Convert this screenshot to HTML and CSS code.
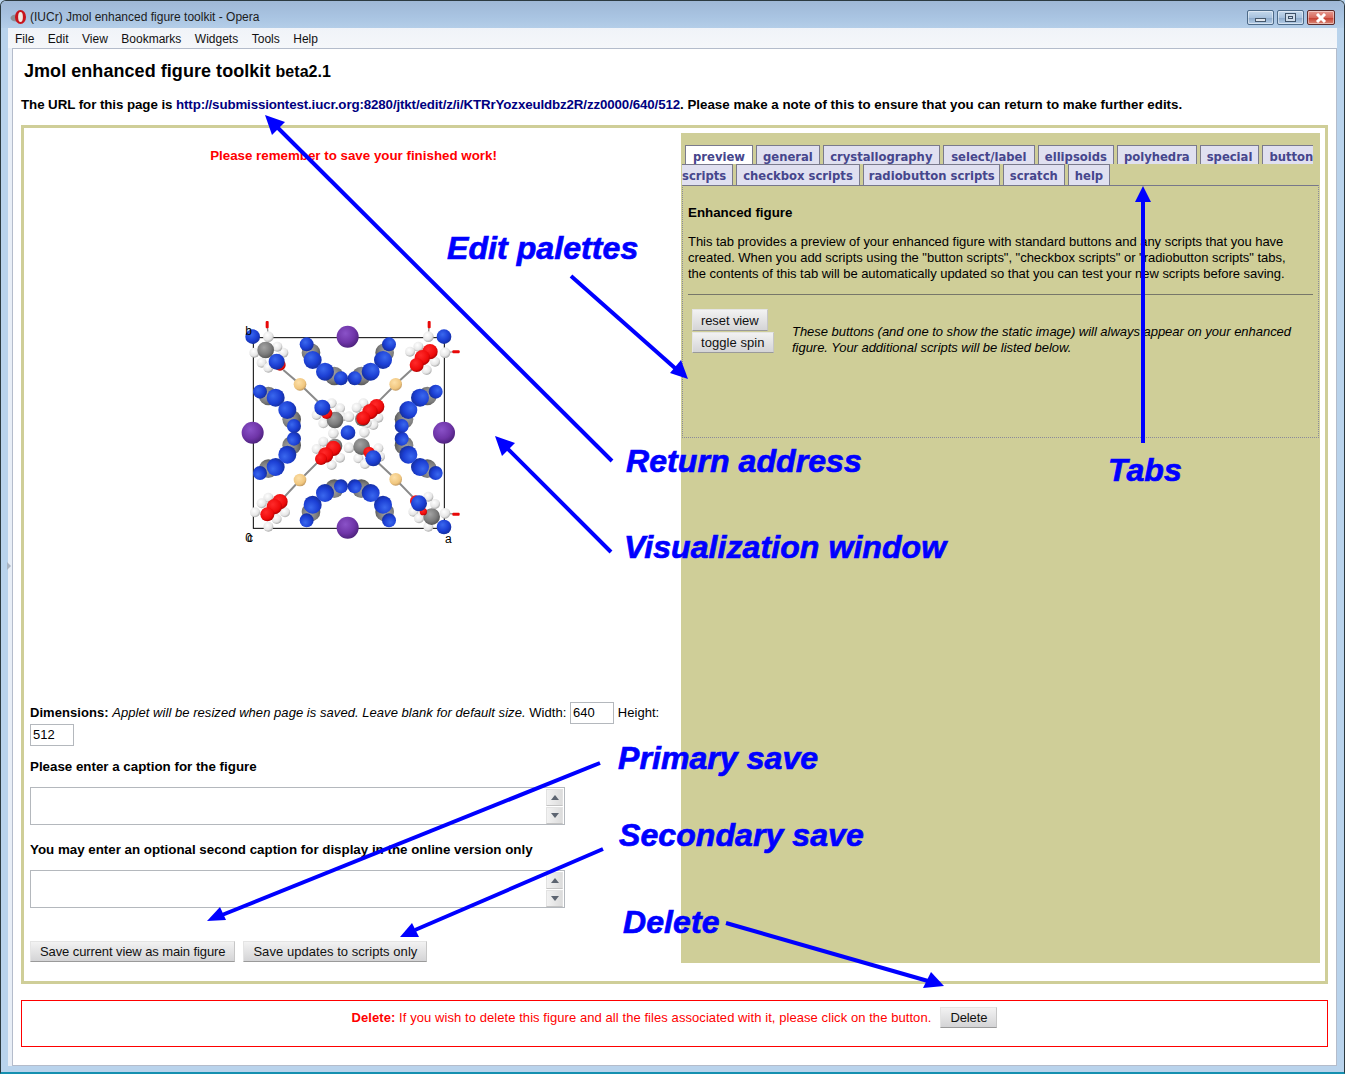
FILE: index.html
```html
<!DOCTYPE html>
<html lang="en">
<head>
<meta charset="utf-8">
<title>(IUCr) Jmol enhanced figure toolkit - Opera</title>
<link rel="stylesheet" href="styles.css">
</head>
<body>
<div class="window">
  <div class="titlebar">
    <svg class="logo" width="18" height="16" viewBox="0 0 18 16">
      <ellipse cx="6" cy="9" rx="5.5" ry="3.5" fill="#8a8f96"/>
      <ellipse cx="10.5" cy="8" rx="5.5" ry="7" fill="#c8141c"/>
      <ellipse cx="10.5" cy="8" rx="2.4" ry="5" fill="#efe9e2"/>
    </svg>
    <span class="title-text">(IUCr) Jmol enhanced figure toolkit - Opera</span>
    <div class="winbtns">
      <div class="winbtn"><span class="glyph-min"></span></div>
      <div class="winbtn"><span class="glyph-max"></span></div>
      <div class="winbtn winclose">
        <svg width="14" height="10" viewBox="0 0 14 10"><path d="M3 1 L11 9 M11 1 L3 9" stroke="#fff" stroke-width="3" fill="none"/></svg>
      </div>
    </div>
  </div>
  <div class="menubar">
    <span>File</span><span>Edit</span><span>View</span><span>Bookmarks</span><span>Widgets</span><span>Tools</span><span>Help</span>
  </div>
  <div class="body-row">
    <div class="side-strip"><span class="grip"></span></div>
    <main class="content">
      <h1>Jmol enhanced figure toolkit <small>beta2.1</small></h1>
      <p class="url-line">The URL for this page is <a href="#">http://submissiontest.iucr.org:8280/jtkt/edit/z/i/KTRrYozxeuldbz2R/zz0000/640/512</a><span class="url-tail">. Please make a note of this to ensure that you can return to make further edits.</span></p>

      <section class="panel">
        <div class="left-col">
          <p class="remember">Please remember to save your finished work!</p>
          <div class="applet">
            <svg class="molecule" width="235" height="235" viewBox="0 0 705 705">
              <defs>
                <radialGradient id="gb" cx=".4" cy=".35" r=".7"><stop offset="0" stop-color="#3a68ee"/><stop offset=".6" stop-color="#1c3fd4"/><stop offset="1" stop-color="#142c98"/></radialGradient>
                <radialGradient id="gg" cx=".4" cy=".35" r=".7"><stop offset="0" stop-color="#a4a4a4"/><stop offset=".6" stop-color="#7c7c7c"/><stop offset="1" stop-color="#505050"/></radialGradient>
                <radialGradient id="gw" cx=".4" cy=".35" r=".7"><stop offset="0" stop-color="#ffffff"/><stop offset=".65" stop-color="#e6e6e6"/><stop offset="1" stop-color="#a0a0a0"/></radialGradient>
                <radialGradient id="gr" cx=".4" cy=".35" r=".7"><stop offset="0" stop-color="#ff2a2a"/><stop offset=".7" stop-color="#ee0a0a"/><stop offset="1" stop-color="#a00000"/></radialGradient>
                <radialGradient id="gt" cx=".4" cy=".35" r=".7"><stop offset="0" stop-color="#fde0a8"/><stop offset=".7" stop-color="#f0c67e"/><stop offset="1" stop-color="#b8905a"/></radialGradient>
                <radialGradient id="gp" cx=".4" cy=".35" r=".7"><stop offset="0" stop-color="#8a52c8"/><stop offset=".6" stop-color="#6f35a8"/><stop offset="1" stop-color="#4a2078"/></radialGradient>
                <g id="arc-t">
                  <circle cx="228" cy="113" r="28" fill="url(#gg)"/>
                  <circle cx="298" cy="183" r="28" fill="url(#gg)"/>
                  <circle cx="215" cy="88" r="21" fill="url(#gb)"/>
                  <circle cx="318" cy="190" r="21" fill="url(#gb)"/>
                  <circle cx="233" cy="135" r="27" fill="url(#gb)"/>
                  <circle cx="270" cy="170" r="27" fill="url(#gb)"/>
                </g>
                <g id="arc-l"><use href="#arc-t" transform="matrix(0 1 1 0 -13 15)"/></g>
              </defs>
              <g class="bonds">
                <path d="M145 165 L195 208 L265 275"/>
                <path d="M545 150 L482 208 L415 275"/>
                <path d="M135 560 L195 495 L265 425"/>
                <path d="M415 430 L482 493 L552 565"/>
                <path class="thin" d="M97 35 L100 65 M582 35 L580 65 M630 113 L660 110 M630 595 L660 597"/>
              </g>
              <g class="cell"><rect x="55" y="68" width="573" height="572"/></g>
              <use href="#arc-t"/>
              <use href="#arc-t" transform="matrix(-1 0 0 1 677 0)"/>
              <use href="#arc-t" transform="matrix(1 0 0 -1 0 704)"/>
              <use href="#arc-t" transform="matrix(-1 0 0 -1 677 704)"/>
              <use href="#arc-l"/>
              <use href="#arc-l" transform="matrix(-1 0 0 1 677 0)"/>
              <use href="#arc-l" transform="matrix(1 0 0 -1 0 704)"/>
              <use href="#arc-l" transform="matrix(-1 0 0 -1 677 704)"/>
              <g fill="url(#gw)">
                <circle cx="100" cy="65" r="16"/><circle cx="58" cy="113" r="15"/><circle cx="145" cy="113" r="15"/><circle cx="127" cy="95" r="15"/><circle cx="80" cy="143" r="15"/><circle cx="100" cy="158" r="15"/>
                <circle cx="550" cy="95" r="15"/><circle cx="525" cy="110" r="15"/><circle cx="600" cy="140" r="15"/><circle cx="575" cy="165" r="15"/><circle cx="580" cy="65" r="16"/><circle cx="630" cy="113" r="16"/>
                <circle cx="100" cy="548" r="15"/><circle cx="80" cy="565" r="15"/><circle cx="60" cy="592" r="15"/><circle cx="150" cy="592" r="15"/><circle cx="125" cy="612" r="15"/><circle cx="100" cy="635" r="15"/>
                <circle cx="630" cy="595" r="16"/><circle cx="535" cy="590" r="15"/><circle cx="552" cy="610" r="15"/><circle cx="580" cy="635" r="15"/><circle cx="600" cy="567" r="15"/><circle cx="580" cy="545" r="15"/>
                <circle cx="290" cy="265" r="15"/><circle cx="315" cy="280" r="15"/><circle cx="288" cy="312" r="15"/><circle cx="265" cy="325" r="15"/><circle cx="245" cy="300" r="15"/><circle cx="320" cy="305" r="15"/><circle cx="342" cy="305" r="16"/>
                <circle cx="385" cy="265" r="15"/><circle cx="365" cy="278" r="15"/><circle cx="430" cy="308" r="15"/><circle cx="415" cy="330" r="15"/><circle cx="395" cy="325" r="15"/><circle cx="388" cy="352" r="16"/>
                <circle cx="265" cy="380" r="15"/><circle cx="245" cy="402" r="15"/><circle cx="315" cy="428" r="15"/><circle cx="290" cy="450" r="15"/><circle cx="295" cy="355" r="16"/><circle cx="342" cy="398" r="16"/>
                <circle cx="370" cy="430" r="15"/><circle cx="390" cy="447" r="15"/><circle cx="430" cy="400" r="15"/><circle cx="435" cy="425" r="15"/>
              </g>
              <g fill="url(#gg)">
                <circle cx="92" cy="105" r="25"/><circle cx="590" cy="605" r="25"/><circle cx="300" cy="315" r="25"/><circle cx="380" cy="395" r="25"/><circle cx="382" cy="312" r="22"/><circle cx="300" cy="393" r="22"/>
              </g>
              <g fill="url(#gr)">
                <circle cx="135" cy="150" r="17"/><circle cx="585" cy="110" r="23"/><circle cx="562" cy="128" r="23"/><circle cx="545" cy="150" r="21"/>
                <circle cx="135" cy="560" r="23"/><circle cx="118" cy="575" r="23"/><circle cx="97" cy="598" r="21"/><circle cx="542" cy="558" r="17"/><circle cx="565" cy="590" r="11"/>
                <circle cx="275" cy="295" r="17"/><circle cx="425" cy="275" r="23"/><circle cx="405" cy="290" r="23"/><circle cx="385" cy="310" r="21"/>
                <circle cx="295" cy="400" r="23"/><circle cx="272" cy="420" r="23"/><circle cx="258" cy="432" r="18"/><circle cx="402" cy="412" r="17"/>
              </g>
              <g class="stub">
                <rect x="92" y="18" width="9" height="22" rx="3"/><rect x="578" y="18" width="9" height="22" rx="3"/>
                <rect x="652" y="106" width="22" height="9" rx="3"/><rect x="652" y="593" width="22" height="9" rx="3"/>
              </g>
              <g fill="url(#gb)">
                <circle cx="53" cy="65" r="22"/><circle cx="627" cy="65" r="22"/><circle cx="627" cy="636" r="22"/><circle cx="125" cy="140" r="24"/><circle cx="552" cy="565" r="24"/><circle cx="262" cy="278" r="24"/><circle cx="415" cy="430" r="24"/><circle cx="339" cy="353" r="22"/>
              </g>
              <g fill="url(#gt)">
                <circle cx="195" cy="208" r="19"/><circle cx="482" cy="208" r="19"/><circle cx="195" cy="495" r="19"/><circle cx="482" cy="493" r="19"/>
              </g>
              <g fill="url(#gp)">
                <circle cx="338" cy="65" r="33"/><circle cx="53" cy="353" r="33"/><circle cx="627" cy="353" r="33"/><circle cx="338" cy="638" r="33"/>
              </g>
              <text class="axis" x="31" y="60">b</text><text class="axis" x="31" y="680">0</text><text class="axis" x="36" y="680">c</text><text class="axis" x="630" y="683">a</text>
            </svg>
          </div>
          <p class="dimensions"><b>Dimensions:</b> <i>Applet will be resized when page is saved. Leave blank for default size.</i> Width: <input class="dim-input" type="text" value="640"> Height: <input class="dim-input" type="text" value="512"></p>
          <p class="caption-label first">Please enter a caption for the figure</p>
          <div class="captionbox">
            <textarea class="caption-input"></textarea>
            <div class="scrollbar"><span class="arrow up"></span><span class="arrow down"></span></div>
          </div>
          <p class="caption-label second">You may enter an optional second caption for display in the online version only</p>
          <div class="captionbox">
            <textarea class="caption-input"></textarea>
            <div class="scrollbar"><span class="arrow up"></span><span class="arrow down"></span></div>
          </div>
          <div class="save-row">
            <button class="btn" type="button">Save current view as main figure</button>
            <button class="btn spaced" type="button">Save updates to scripts only</button>
          </div>
        </div>

        <div class="right-col">
          <div class="tabs">
            <div class="tabrow row1">
              <a class="tab active">preview</a><a class="tab">general</a><a class="tab tab-crystal">crystallography</a><a class="tab tab-select">select/label</a><a class="tab">ellipsoids</a><a class="tab">polyhedra</a><a class="tab">special</a><a class="tab cut-end">button</a>
            </div>
            <div class="tabrow row2">
              <a class="tab cut-start">scripts</a><a class="tab">checkbox scripts</a><a class="tab tab-radio">radiobutton scripts</a><a class="tab">scratch</a><a class="tab">help</a>
            </div>
          </div>
          <div class="tabpanel">
            <h2>Enhanced figure</h2>
            <p class="intro">This tab provides a preview of your enhanced figure with standard buttons and any scripts that you have created. When you add scripts using the "button scripts", "checkbox scripts" or "radiobutton scripts" tabs, the contents of this tab will be automatically updated so that you can test your new scripts before saving.</p>
            <hr class="rule">
            <div class="preview-row">
              <div class="preview-btns">
                <button class="btn small" type="button">reset view</button>
                <button class="btn small toggle" type="button">toggle spin</button>
              </div>
              <p class="preview-note">These buttons (and one to show the static image) will always appear on your enhanced figure. Your additional scripts will be listed below.</p>
            </div>
          </div>
        </div>
      </section>

      <section class="delete-box">
        <span><b>Delete:</b> If you wish to delete this figure and all the files associated with it, please click on the button.</span>
        <button class="btn delete-btn" type="button">Delete</button>
      </section>
    </main>
  </div>

  <svg class="arrows" width="1345" height="1074" viewBox="0 0 1345 1074">
    <g class="shafts">
      <path d="M571 276 L676 369"/>
      <path d="M612 461 L276 126"/>
      <path d="M611 552 L506 447"/>
      <path d="M600 763 L222 915"/>
      <path d="M603 849 L415 930"/>
      <path d="M726 923 L928 981"/>
      <path d="M1143 443 L1143 200"/>
    </g>
    <g class="heads">
      <polygon points="688,379 670,373 681,360"/>
      <polygon points="265,115 285,122 272,135"/>
      <polygon points="495,436 515,443 502,456"/>
      <polygon points="207,921 220,907 226,920"/>
      <polygon points="400,937 412,923 419,937"/>
      <polygon points="944,986 923,988 931,972"/>
      <polygon points="1143,186 1135,202 1151,202"/>
    </g>
  </svg>
  <span class="note note-edit">Edit palettes</span>
  <span class="note note-return">Return address</span>
  <span class="note note-vis">Visualization window</span>
  <span class="note note-tabs">Tabs</span>
  <span class="note note-primary">Primary save</span>
  <span class="note note-secondary">Secondary save</span>
  <span class="note note-delete">Delete</span>
</div>
</body>
</html>
```
FILE: styles.css
```css
* { box-sizing: border-box; }
html, body { margin: 0; padding: 0; }
body { font-family: "Liberation Sans", Arial, sans-serif; font-size: 13px; color: #000; background: #b9d3ec; overflow: hidden; }

.window { position: relative; width: 1345px; height: 1074px; display: flex; flex-direction: column; overflow: hidden;
  background: #b9d3ec; border: 1px solid #2c3a40; border-radius: 6px 6px 0 0; border-bottom: 2px solid #1590b0; }

.titlebar { flex: none; height: 27px; display: flex; align-items: center; padding: 5px 9px 0 9px;
  background: linear-gradient(#9fb8d6, #a9c4e2 60%, #b4cee8); }
.logo { flex: none; margin: 0 2px 0 0; }
.title-text { font-size: 12px; color: #1c1c1c; }
.winbtns { margin-left: auto; display: flex; gap: 3px; margin-top: 1px; }
.winbtn { width: 27px; height: 15px; border: 1px solid #4d6a88; border-radius: 2px; display: flex; align-items: center; justify-content: center;
  background: linear-gradient(#c4d8ec, #a8c2de 50%, #8aa8ca 51%, #b5cde6); box-shadow: inset 0 0 0 1px rgba(255,255,255,.45); }
.winclose { width: 28px; border-color: #5c2a2a; background: linear-gradient(#e59a90, #d86a5e 50%, #c53a2c 51%, #d98878); }
.glyph-min { width: 11px; height: 4px; margin-top: 4px; background: #dfe6ee; border: 1px solid #46586c; }
.glyph-max { width: 11px; height: 9px; background: #cfdcea; border: 1px solid #3f5268; box-shadow: inset 0 0 0 2px #cfdcea, inset 0 0 0 3px #3f5268; }

.menubar { flex: none; height: 20px; margin: 0 7px 0 7px; padding: 1px 0 0 7px; display: flex; gap: 13.5px; align-items: center;
  background: linear-gradient(#f0f3f8, #f5f7fa); font-size: 12px; color: #111; }

.body-row { flex: 1; display: flex; min-height: 0; margin: 0 7px 6px 7px; }
.side-strip { flex: none; width: 4px; background: #e8eef6; display: flex; align-items: center; justify-content: center; }
.grip { flex: none; width: 0; height: 0; border-left: 4px solid #a9b4c2; border-top: 4px solid transparent; border-bottom: 4px solid transparent; margin: 17px 0 0 -3px; }

.content { flex: 1; min-width: 0; background: #fff; border: 1px solid #b4bccb; padding: 0 8px; }

h1 { margin: 11px 0 0 3px; height: 22px; font-size: 18px; line-height: 22px; font-weight: bold; letter-spacing: .05px; }
h1 small { font-size: 16px; line-height: 1; }
.url-line { margin: 15px 0 0; height: 16px; font-size: 13.33px; line-height: 16px; font-weight: bold; letter-spacing: -.07px; }
.url-line a { color: #000080; text-decoration: none; letter-spacing: -.13px; }
.url-tail { letter-spacing: .01px; }

.panel { margin-top: 12px; height: 859px; border: 3px solid #cfce98; padding: 5px 5px 18px 6px; display: flex; }

.left-col { flex: none; width: 651px; }
.remember { margin: 15px 0 0; width: 647px; text-align: center; color: #f00; font-size: 13.33px; line-height: 16px; font-weight: bold; }
.applet { width: 640px; height: 512px; margin-top: 11px; display: flex; align-items: center; justify-content: center; }
.molecule { flex: none; margin: 3px 0 0 5px; }
.bonds path { stroke: #8a8a8a; stroke-width: 6; fill: none; }
.bonds path.thin { stroke: #999; stroke-width: 4; }
.cell rect { fill: none; stroke: #000; stroke-width: 3; }
.stub rect { fill: #e80808; }
.axis { font: 36px "Liberation Sans", Arial, sans-serif; fill: #000; }

.dimensions { margin: 15px 0 0; width: 647px; line-height: 22px; font-size: 13px; letter-spacing: .05px; }
.dim-input { width: 44px; height: 22px; padding: 0 0 1px 2px; border: 1px solid #b4b8bd; font: 13px "Liberation Sans", Arial, sans-serif; vertical-align: top; margin: 0; background: #fff; color: #000; }
.caption-label { margin: 0; font-size: 13.33px; line-height: 16px; font-weight: bold; }
.caption-label.first { margin-top: 13px; }
.caption-label.second { margin-top: 17px; }

.captionbox { width: 535px; height: 38px; margin-top: 12px; display: flex; border: 1px solid #b4b8bd; background: #fff; }
.caption-input { flex: 1; border: 0; outline: 0; padding: 0; margin: 0; resize: none; overflow: hidden; background: #fff; }
.scrollbar { flex: none; width: 17px; display: flex; flex-direction: column; gap: 1px; margin-right: 1px; padding-top: 1px; }
.arrow { flex: 1; background: linear-gradient(90deg, #f2f2f2, #dcdcdc); border: 1px solid #e2e2e2; border-bottom-color: #c4c4c4; display: flex; align-items: center; justify-content: center; }
.arrow::after { content: ""; width: 0; height: 0; border-left: 4px solid transparent; border-right: 4px solid transparent; }
.arrow.up::after { border-bottom: 5px solid #5c6470; }
.arrow.down::after { border-top: 5px solid #5c6470; }

.save-row { display: flex; gap: 8px; margin-top: 33px; }
.btn { height: 21px; padding: 0 9px; border: 1px solid #e4e4e4; border-bottom-color: #9a9a9a; border-right-color: #c6c6c6; background: linear-gradient(#f2f2f2, #d4d4d6); font: 13px "Liberation Sans", Arial, sans-serif; letter-spacing: -.1px; color: #111; }
.btn.spaced { letter-spacing: .05px; }

.right-col { flex: none; width: 639px; background: #cfce98; display: flex; flex-direction: column; padding: 12px 0 0 1px; height: 830px; }

.tabs { flex: none; width: 637px; overflow: hidden; }
.tabrow { display: flex; gap: 3px; }
.row1 { height: 19px; padding-left: 3px; width: 632px; overflow: hidden; }
.row2 { height: 21px; }
.tab { flex: none; height: 20px; padding: 4px 6px 0; border: 1px solid #7a7a8c; border-bottom: 0; background: #e0e0f0; color: #46468c; font: bold 11.6px/15px "DejaVu Sans", Verdana, sans-serif; white-space: nowrap; text-align: center; }
.row2 .tab { height: 21px; }
.tab.active { background: #fff; width: 68px; }
.tab-crystal { width: 117px; }
.tab-select { width: 92px; }
.tab-radio { width: 137px; padding-left: 5px; padding-right: 4px; }
.tab.cut-end { border-right: 0; padding-right: 0; }
.tab.cut-start { border-left: 0; padding-left: 0; }

.tabpanel { flex: none; width: 637px; height: 253px; border: 1px dotted #8a8a9a; border-top: 1px solid #77778a; padding: 0 5px; }
.tabpanel h2 { margin: 19px 0 0; font-size: 13.33px; line-height: 16px; font-weight: bold; }
.intro { margin: 13px 0 0; max-width: 617px; font-size: 13px; line-height: 16px; letter-spacing: -.03px; }
.rule { margin: 12px 0 0; border: 0; border-top: 1px solid #77776a; height: 1px; background: #e8e8d0; }
.preview-row { display: flex; margin: 14px 0 0 4px; }
.preview-btns { flex: none; width: 100px; display: flex; flex-direction: column; align-items: flex-start; gap: 1px; }
.btn.small { padding: 0 8px; height: 22px; }
.btn.toggle { padding: 0 9px 0 8px; height: 21px; letter-spacing: .05px; }
.preview-note { margin: 15px 0 0; font-style: italic; font-size: 13px; line-height: 16px; width: 510px; letter-spacing: -.03px; }

.delete-box { margin-top: 16px; height: 47px; border: 1px solid #f00; color: #f00; display: flex; justify-content: center; align-items: flex-start; padding-top: 6px; gap: 9px; font-size: 13px; }
.delete-box span { line-height: 22px; letter-spacing: .07px; }
.delete-btn { padding: 0 9px; }

.arrows { position: absolute; left: -1px; top: -1px; pointer-events: none; }
.shafts path { stroke: #00f; stroke-width: 4; fill: none; }
.heads polygon { fill: #00f; }

.note { position: absolute; color: #00f; font: italic bold 32px/36px "Liberation Sans", Arial, sans-serif; letter-spacing: .08px; white-space: nowrap; -webkit-text-stroke: .7px #00f; }
.note-edit { left: 446px; top: 229px; }
.note-return { left: 625px; top: 442px; }
.note-vis { left: 623px; top: 528px; }
.note-tabs { left: 1107px; top: 451px; }
.note-primary { left: 617px; top: 739px; }
.note-secondary { left: 618px; top: 816px; }
.note-delete { left: 622px; top: 903px; }
```
